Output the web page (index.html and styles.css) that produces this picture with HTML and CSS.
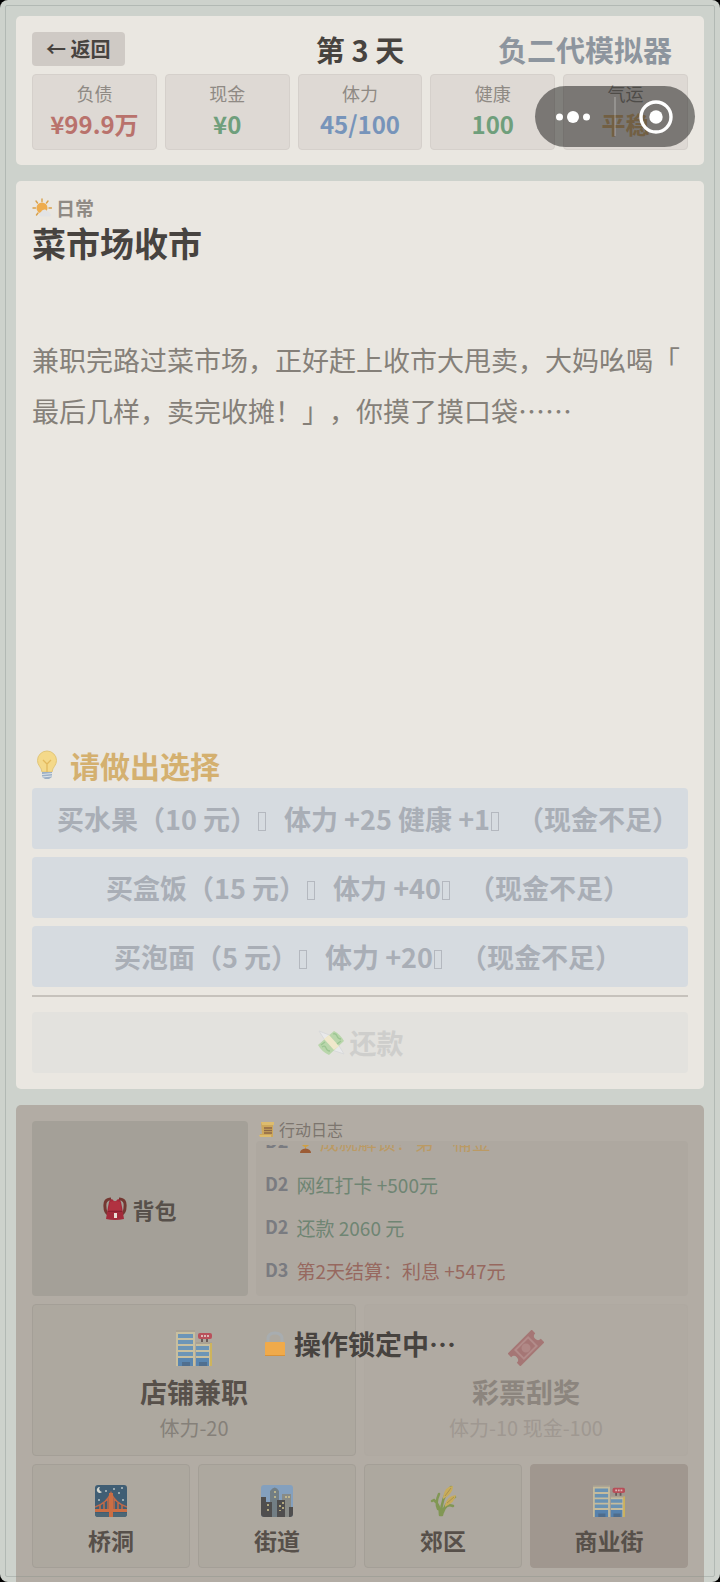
FILE: index.html
```html
<!DOCTYPE html>
<html lang="zh-CN">
<head>
<meta charset="utf-8">
<meta name="viewport" content="width=device-width, initial-scale=1">
<title>负二代模拟器</title>
<link rel="stylesheet" href="styles.css">
</head>
<body>
<svg class="defs" width="0" height="0" aria-hidden="true">
  <symbol id="mall" viewBox="0 0 36 36">
    <path fill="#cfc5a0" d="M0 0h19v36H0zM20 13h16v23H20z"/>
    <path fill="#a9a192" d="M0 0h19v2H0zM20 12h16v2H20z"/>
    <path fill="#5d91bd" d="M2 4h15v4H2zM2 10h15v4H2zM2 16h15v4H2zM2 22h15v4H2zM20 16h13v4H20zM20 22h13v4H20z"/>
    <path fill="#467eb5" d="M2 28h15v8H2zM20 28h13v8H20z"/>
    <path fill="#3a628c" d="M6 32h8v4H6zM23 32h8v4h-8z"/>
    <path fill="#d7b84c" d="M34 13h2v23h-2z"/>
    <path fill="#5b4a48" d="M25 8h2v4h-2zM30 8h2v4h-2z"/>
    <rect x="22" y="3" width="14" height="6" rx="2" fill="#bd3c4b"/>
    <path stroke="#e6bfc0" stroke-width="2" stroke-dasharray="2 1" d="M25 6h8"/>
  </symbol>
</svg>
<div class="screen">
  <header class="card status">
    <div class="topbar">
      <button class="back" type="button">← 返回</button>
      <h1 class="day">第 3 天</h1>
      <span class="brand">负二代模拟器</span>
    </div>
    <dl class="stats">
      <div class="stat"><dt>负债</dt><dd class="red">¥99.9万</dd></div>
      <div class="stat"><dt>现金</dt><dd class="green">¥0</dd></div>
      <div class="stat"><dt>体力</dt><dd class="blue">45/100</dd></div>
      <div class="stat"><dt>健康</dt><dd class="green">100</dd></div>
      <div class="stat"><dt>气运</dt><dd class="gold">平稳</dd></div>
    </dl>
    <div class="capsule">
      <button type="button" aria-label="更多">
        <svg width="36" height="14" viewBox="0 0 36 14"><g fill="#fff"><circle cx="4.500" cy="7" r="3.500"/><circle cx="18" cy="7" r="6"/><circle cx="31.500" cy="7" r="3.500"/></g></svg>
      </button>
      <button type="button" aria-label="关闭">
        <svg width="34" height="34" viewBox="0 0 34 34"><circle cx="17" cy="17" r="15" fill="none" stroke="#fff" stroke-width="3.400"/><circle cx="17" cy="17" r="6.700" fill="#fff"/></svg>
      </button>
    </div>
  </header>

  <main class="card event">
    <p class="tag">
      <svg width="20" height="20" viewBox="0 0 20 20"><path stroke="#d9a04a" stroke-width="1.400" stroke-linecap="round" d="M10 1v2.500M4 3l1.500 2M16 3l-1.500 2M1 10h2.500M17 10h2.500M4.500 17l1.500-2"/><circle cx="10" cy="10" r="5.500" fill="#eeac4d"/><path fill="#e2e3e5" d="M9 18.500a2.300 2.300 0 0 1 0-4.500 3.400 3.400 0 0 1 6-1 3 3 0 0 1 3 2.500 1.700 1.700 0 0 1 0 3z"/></svg>
      日常
    </p>
    <h2 class="title">菜市场收市</h2>
    <p class="story">兼职完路过菜市场，正好赶上收市大甩卖，大妈吆喝「最后几样，卖完收摊！」，你摸了摸口袋……</p>
    <section class="choices">
      <h3 class="prompt">
        <svg width="30" height="30" viewBox="0 0 30 30"><path fill="#f4d98a" stroke="#e2c678" d="M15 1a9.500 9.500 0 0 0-9.500 9.500c0 5 4 6.500 4.500 11.500h10c.5-5 4.500-6.500 4.500-11.500A9.500 9.500 0 0 0 15 1z"/><path fill="none" stroke="#e3b95d" stroke-width="1.300" d="M11 10l4 4 4-4M15 14v8"/><path fill="#9db0c5" d="M10 22h10v5l-3 2h-4l-3-2z"/><path stroke="#dce3e9" d="M10 24.500l10-1M10 27l10-1"/></svg>
        请做出选择
      </h3>
      <button class="option" type="button" disabled><span>买水果（10 元）<i class="box"></i>体力 +25 健康 +1<i class="box"></i>（现金不足）</span></button>
      <button class="option" type="button" disabled><span>买盒饭（15 元）<i class="box"></i>体力 +40<i class="box"></i>（现金不足）</span></button>
      <button class="option" type="button" disabled><span>买泡面（5 元）<i class="box"></i>体力 +20<i class="box"></i>（现金不足）</span></button>
    </section>
    <hr class="rule">
    <button class="repay" type="button" disabled>
      <svg width="28" height="26" viewBox="0 0 28 26"><path fill="#e9e9ea" stroke="#d9dadb" d="M2 1l13 5-6 6zM15 20l6-6 6 10z"/><path fill="#b9d6ab" d="M1 15L17 1q6 3 10 10L12 25Q5 22 1 15z"/><path fill="#f0e8cb" d="M7 9l5-4 10 11-5 4z"/><path fill="none" stroke="#9cc592" stroke-width="1.300" d="M4 15l4-3M20 14l4-3M5 17q3-2 4 1t4 3M16 4q3-1 4 2t4 3"/></svg>
      还款
    </button>
  </main>

  <section class="locked">
    <div class="upper">
      <button class="bag" type="button" disabled>
        <svg width="24" height="24" viewBox="0 0 24 24"><path fill="none" stroke="#743832" stroke-width="3" d="M8 2Q1 2 2 10q0 5 3 7M16 2q7 0 6 8 0 5-3 7"/><path fill="#a32a3a" d="M6 5q1-3 3-3l3 3 3-3q2 0 3 3l1 5 2 12q-9 2-18 0L5 10z"/><path fill="#b13241" d="M7 5q5-2 10 0l1 8H6z"/><path fill="#8b2030" d="M5 14h14v1H5z"/><path fill="#eadfd6" d="M11 16h3v5h-3z"/></svg>
        背包
      </button>
      <div class="journal">
        <h3 class="journal-title">
          <svg width="16" height="17" viewBox="0 0 16 17"><path fill="#cda75a" d="M2 1h13v3h-1v12H1v-3h2z"/><path fill="#ddbc6e" d="M2 1h13v3H3zM0 14h12v2H1z"/><path stroke="#8d6747" stroke-width="1.300" d="M5 7h8M5 9.500h8M5 12h8"/></svg>
          行动日志
        </h3>
        <div class="log">
          <p class="entry win"><b>D2</b><span><svg class="trophy" width="19" height="19" viewBox="0 0 19 19"><path fill="#d0a042" d="M4 1h11v5q-1 6-5 7v2H9v-2Q5 12 4 6z"/><path fill="#9c5c35" d="M4 19q0-4 5.500-4.500Q15 15 15 19z"/></svg> 成就解锁！第一桶金</span></p>
          <p class="entry gain"><b>D2</b><span>网红打卡 +500元</span></p>
          <p class="entry gain"><b>D2</b><span>还款 2060 元</span></p>
          <p class="entry loss"><b>D3</b><span>第2天结算：利息 +547元</span></p>
        </div>
      </div>
    </div>
    <div class="actions">
      <button class="tile action" type="button" disabled>
        <svg width="36" height="36"><use href="#mall"/></svg>
        <strong>店铺兼职</strong><small>体力-20</small>
      </button>
      <button class="tile action off" type="button" disabled>
        <svg width="36" height="36" viewBox="0 0 36 36"><g transform="rotate(-45 18 18)"><path fill="#a36a6a" d="M1 9h34v5a4 4 0 0 0 0 8v5H1v-5a4 4 0 0 0 0-8z"/><path fill="none" stroke="#b38585" stroke-width="2" d="M9 12h18v12H9z"/><circle cx="18" cy="18" r="4.500" fill="#b08080"/></g></svg>
        <strong>彩票刮奖</strong><small>体力-10 现金-100</small>
      </button>
    </div>
    <nav class="places">
      <button class="tile place" type="button" disabled>
        <svg width="32" height="32" viewBox="0 0 32 32"><rect width="32" height="32" rx="3" fill="#264c6a"/><path fill="#dfe3dc" d="M5 2a3 3 0 1 0 2 5 3 3 0 0 1-2-5z"/><g fill="#b9c7cd"><circle cx="11" cy="6" r="1"/><circle cx="19" cy="4" r="1"/><circle cx="27" cy="3" r="1"/><circle cx="24" cy="8" r="1"/><circle cx="28" cy="15" r="1"/><circle cx="4" cy="15" r="1"/></g><path fill="#34566b" d="M0 28h32v1q0 3-3 3H3q-3 0-3-3z"/><path fill="none" stroke="#c45a34" stroke-width="1.600" d="M0 22q12-4 16-14 4 10 16 14M5 20v6M9 18v8M23 18v8M27 20v6M13 13v13M19 13v13"/><path fill="#d3602e" d="M14 8h4v24h-4zM0 24h32v3H0z"/></svg>
        <strong>桥洞</strong>
      </button>
      <button class="tile place" type="button" disabled>
        <svg width="32" height="32" viewBox="0 0 32 32"><rect width="32" height="32" rx="3" fill="#7b9fc6"/><path fill="#64747e" d="M9 6q5-7 9 0v26H9z"/><path fill="#808582" d="M21 9h9v23h-9z"/><path fill="#38383a" d="M0 12h5v5h6v15H3q-3 0-3-3zM16 15h8v17h-8zM28 22h4v7q0 3-3 3h-1z"/><path stroke="#dccb8a" stroke-width="1.500" stroke-dasharray="2 3" d="M14 6v8M25 11v4M28 11v4M7 19v8M19 20v6M22 17v10"/></svg>
        <strong>街道</strong>
      </button>
      <button class="tile place" type="button" disabled>
        <svg width="32" height="32" viewBox="0 0 32 32"><path fill="none" stroke="#779342" stroke-width="2.500" stroke-linecap="round" d="M14 30Q14 12 24 2M15 30Q17 18 28 12M13 30Q13 20 7 15M16 27Q19 18 26 21M11 24Q8 18 12 9M7 15l-2 1"/><path fill="#cfad4b" d="M16 12Q18 1 26 1q0 8-10 13zM18 20q2-9 11-10-1 7-11 12z"/><path fill="none" stroke="#a98d3d" d="M18 11l6-8M20 18l7-6"/></svg>
        <strong>郊区</strong>
      </button>
      <button class="tile place current" type="button" disabled>
        <svg width="32" height="32"><use href="#mall"/></svg>
        <strong>商业街</strong>
      </button>
    </nav>
    <p class="lock-note">
      <svg width="22" height="26" viewBox="0 0 22 26"><path fill="none" stroke="#a8adb0" stroke-width="3" d="M4 12V8q0-6 7-6t7 6v4"/><rect x="1" y="11" width="20" height="14" rx="1" fill="#f0aa4a"/><path fill="#d89238" d="M1 24h20v1H1z"/></svg>
      操作锁定中⋯
    </p>
  </section>
</div>
</body>
</html>
```

FILE: styles.css
```css
* { box-sizing: border-box; }

body {
  margin: 0;
  background: #000;
  color: #47433f;
  font-family: "Noto Sans CJK SC", "Noto Sans", sans-serif;
}

h1, h2, h3, p, dl, dd { margin: 0; }
svg { display: block; flex: none; }
strong { font-weight: 700; }
.defs { position: absolute; }

button {
  border: 0;
  padding: 0;
  color: inherit;
  font-family: inherit;
  font-weight: 700;
}

.screen {
  position: relative;
  display: flex;
  flex-direction: column;
  gap: 16px;
  min-height: 100vh;
  padding: 16px 16px 0;
  border-radius: 8px;
  background: #cdd2cc;
}

.screen::after {
  content: "";
  position: absolute;
  inset: 5px;
  border: 1px solid rgba(130, 140, 135, 0.35);
  border-radius: 2px;
  pointer-events: none;
}

.card {
  padding: 16px;
  border-radius: 5px;
  background: #eae7e1;
}

/* status header */
.status {
  position: relative;
  display: flex;
  flex-direction: column;
  gap: 8px;
  padding-bottom: 15px;
}

.topbar {
  display: grid;
  grid-template-columns: 1fr auto 1fr;
  align-items: center;
  height: 34px;
}

.back {
  justify-self: start;
  padding: 0 14px;
  border-radius: 4px;
  background: #cfcac5;
  font-size: 20px;
  line-height: 34px;
}

.day, .brand {
  font-size: 29px;
  font-weight: 700;
  line-height: 34px;
}

.brand {
  justify-self: end;
  padding-right: 16px;
  color: #8d959e;
}

.stats {
  display: grid;
  grid-template-columns: repeat(5, 1fr);
  gap: 8px;
}

.stat {
  padding: 5px 0 8px;
  border: 1px solid #d5d0cb;
  border-radius: 4px;
  background: #ded9d4;
  text-align: center;
}

.stat dt {
  color: #8f8a84;
  font-size: 18px;
  line-height: 27px;
}

.stat dd {
  font-size: 24px;
  font-weight: 700;
  line-height: 34px;
}

.red { color: #b9726c; }
.green { color: #6f9f7c; }
.blue { color: #7794ba; }
.gold { color: #cfae7b; }

.capsule {
  position: absolute;
  top: 70px;
  right: 9px;
  display: flex;
  align-items: center;
  justify-content: space-between;
  width: 160px;
  height: 61px;
  padding: 0 22px 0 20px;
  border-radius: 31px;
  background: rgba(0, 0, 0, 0.45);
}

.capsule::before {
  content: "";
  position: absolute;
  top: 11px;
  left: 79px;
  width: 2px;
  height: 39px;
  background: rgba(255, 255, 255, 0.2);
}

.capsule button { background: none; }

/* event card */
.event {
  flex: 1;
  display: flex;
  flex-direction: column;
}

.tag {
  display: flex;
  align-items: center;
  gap: 4px;
  color: #8f8a84;
  font-size: 19px;
  font-weight: 700;
  line-height: 22px;
}

.title {
  font-size: 34px;
  font-weight: 700;
  line-height: 48px;
}

.story {
  margin-top: 67px;
  color: #858079;
  font-size: 27px;
  line-height: 51px;
  line-break: anywhere;
  text-spacing-trim: space-all;
}

.choices {
  display: flex;
  flex-direction: column;
  gap: 8px;
  margin-top: auto;
}

.prompt {
  display: flex;
  align-items: center;
  gap: 8px;
  color: #d4b06f;
  font-size: 30px;
  line-height: 30px;
}

.option, .repay {
  height: 61px;
  border-radius: 4px;
  font-size: 27px;
  line-height: 40px;
  white-space: nowrap;
}

.option {
  background: #d6dbe0;
  color: #a9aeb6;
}

.option span { margin-right: -16px; }

.box {
  display: inline-block;
  width: 8px;
  height: 19px;
  margin: 0 18px 0 1px;
  border: 1px solid #b4b8bf;
  vertical-align: -1px;
}

.rule {
  width: 100%;
  height: 2px;
  margin: 8px 0 15px;
  border: 0;
  background: #c6c2bc;
}

.repay {
  display: flex;
  align-items: center;
  justify-content: center;
  gap: 5px;
  background: #e3e2de;
  color: #cececc;
}

/* locked area */
.locked {
  position: relative;
  display: flex;
  flex-direction: column;
  gap: 8px;
  padding: 16px 16px 14px;
  border-radius: 5px 5px 0 0;
  background: #b2aca4;
  color: #57504a;
}

.upper {
  display: grid;
  grid-template-columns: 1fr 2fr;
  grid-template-rows: minmax(0, 1fr);
  gap: 8px;
  height: 175px;
}

.bag {
  display: flex;
  align-items: center;
  justify-content: center;
  gap: 5px;
  border-radius: 4px;
  background: #a4a098;
  font-size: 22px;
}

.journal {
  display: flex;
  flex-direction: column;
}

.journal-title {
  display: flex;
  align-items: center;
  gap: 4px;
  padding-left: 3px;
  color: #7c756e;
  font-size: 16px;
  font-weight: 400;
  line-height: 17px;
}

.log {
  flex: 1;
  display: flex;
  flex-direction: column;
  justify-content: flex-end;
  min-height: 0;
  margin-top: 3px;
  padding-left: 9px;
  border: solid #aea8a0;
  border-width: 4px 0;
  border-radius: 4px;
  background: #aea8a0;
  overflow: hidden;
}

.entry {
  flex: none;
  display: flex;
  gap: 8px;
  font-size: 19px;
  line-height: 43px;
}

.entry b {
  color: #7a7b80;
  font-size: 18px;
  line-height: 41px;
}

.entry.win { color: #bb9a64; }
.entry.gain { color: #6f8573; }
.entry.loss { color: #97685f; }
.trophy { display: inline-block; vertical-align: -3px; }

.actions, .places {
  display: grid;
  gap: 8px;
}

.actions { grid-template-columns: repeat(2, 1fr); }
.places { grid-template-columns: repeat(4, 1fr); }

.tile {
  display: flex;
  flex-direction: column;
  align-items: center;
  border: 1px solid #a49f97;
  border-radius: 4px;
  background: #ada89f;
}

.tile svg { opacity: 0.8; }

.action { padding: 25px 0 12px; }

.action strong {
  margin-top: 6px;
  font-size: 27px;
  line-height: 40px;
}

.action small {
  color: #858079;
  font-size: 20px;
  font-weight: 400;
  line-height: 31px;
}

.action.off {
  border-color: #afa9a1;
  background: #b0aaa2;
  color: #8c857e;
}

.action.off small { color: #9f9891; }

.place { padding: 20px 0 10px; }

.place strong {
  margin-top: 6px;
  font-size: 23px;
  line-height: 34px;
}

.place.current {
  border-color: #a0978f;
  background: #a0978f;
}

.lock-note {
  position: absolute;
  inset: 0;
  display: flex;
  align-items: center;
  justify-content: center;
  gap: 8px;
  color: #47433f;
  font-size: 27px;
  font-weight: 700;
  line-height: 40px;
}
```
